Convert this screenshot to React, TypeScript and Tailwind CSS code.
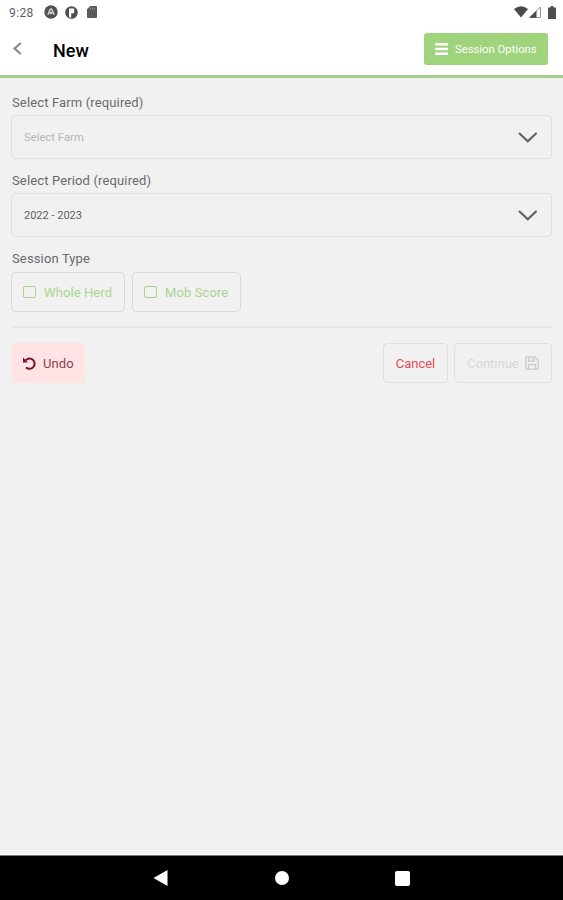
import type { ReactNode } from "react";

const StatusBar = () => {
  return (
    <div className="flex items-center justify-between h-6 pl-[9px] pr-[7px] text-[#606060]">
      <div className="flex items-center">
        <span className="w-[35px] pt-px text-[12px] tracking-[0.4px]">9:28</span>
        <svg className="w-[14px] h-[14px]" viewBox="0 0 14 14">
          <circle cx="7" cy="7" r="6.7" fill="#505050" />
          <path
            d="M3.8 9.8 6 4.6Q7 3.2 8 4.6L10.2 9.8M5.8 8.8 7 7 8.2 8.8"
            fill="none"
            stroke="#e8e8e8"
            strokeWidth="1.2"
          />
        </svg>
        <svg className="w-[13px] h-[13px] ml-[7px]" viewBox="0 0 13 13">
          <circle cx="6.5" cy="6.5" r="6.3" fill="#4c4c4c" />
          <path d="M4 2.6h5.2v4.6H6.2v4.4H4z" fill="#fff" />
        </svg>
        <svg className="w-[10px] h-[12px] ml-[9px]" viewBox="0 0 10 12">
          <path d="M3.3 0H9q1 0 1 1v10q0 1-1 1H1q-1 0-1-1V3.3z" fill="#5a5a5a" />
          <path d="M3.4 1.6v2M5.4 1.6v2M7.4 1.6v2" stroke="#999" strokeWidth="0.9" />
        </svg>
      </div>
      <div className="flex items-center">
        <svg className="w-[14px] h-[12px]" viewBox="0 0 14 12">
          <path d="M0 3Q7-2.6 14 3L7 11.6z" fill="#4a4a4a" />
        </svg>
        <svg className="w-[12px] h-[12px] ml-[1px]" viewBox="0 0 12 12">
          <path d="M11.5 1v10.5H1z" fill="#fff" stroke="#888" strokeWidth="0.9" />
          <path d="M7.5 4.5v7.3H.2z" fill="#4a4a4a" />
        </svg>
        <svg className="w-[8px] h-[13px] ml-[7px]" viewBox="0 0 8 13">
          <path d="M2.5 0h3v1.5H8V13H0V1.5h2.5z" fill="#505050" />
        </svg>
      </div>
    </div>
  );
};

const Header = () => {
  return (
    <div className="flex items-center h-[54px] pl-[12px] pr-[15px] border-b-[3px] border-[#a5d08b]">
      <svg className="w-[11px] h-[13px] -mt-[2px]" viewBox="0 0 11 13">
        <path d="M8.8 1 2.6 6.5 8.8 12" fill="none" stroke="#8b8b90" strokeWidth="2.3" />
      </svg>
      <h1 className="mt-[2px] ml-[30px] text-[18px] leading-5 font-medium text-black">New</h1>
      <button className="flex items-center ml-auto w-[124px] h-[32px] pl-[11px] -mt-[2px] rounded-[3px] bg-[#9fd37c] text-white">
        <svg className="w-[13px] h-[12px]" viewBox="0 0 13 12">
          <path d="M0 1.3h13M0 6h13M0 10.7h13" stroke="#fff" strokeWidth="2.6" />
        </svg>
        <span className="pt-[3px] ml-[7px] text-[11.3px] whitespace-nowrap">Session Options</span>
      </button>
    </div>
  );
};

const Label = ({ children }: { children: ReactNode }) => {
  return (
    <p className="h-[18px] pl-px text-[13px] leading-[18px] tracking-[0.14px] text-[#6a6a6a]">
      {children}
    </p>
  );
};

const Select = ({ value, placeholder }: { value?: string; placeholder?: string }) => {
  return (
    <div className="flex items-center justify-between h-[44px] mt-[3px] pl-[12px] pr-[14px] border border-[#dfdfdf] rounded-[4px]">
      {value ? (
        <span className="pt-[2px] text-[11px] text-[#606060]">{value}</span>
      ) : (
        <span className="pt-[2px] text-[11.3px] text-[#b6b6b6]">{placeholder}</span>
      )}
      <svg className="w-[19px] h-[11px]" viewBox="0 0 19 11">
        <path d="M1 .9 9.8 9.3 18.6.9" fill="none" stroke="#5f5f5f" strokeWidth="2.1" />
      </svg>
    </div>
  );
};

const CheckButton = ({ label, className }: { label: string; className: string }) => {
  return (
    <button
      className={`flex items-center h-[40px] pl-[11px] border border-[#dadada] rounded-[4px] text-[#a9d690] ${className}`}
    >
      <span className="w-[13px] h-[12px] -mt-px border border-[#a5d48a] rounded-[2px]" />
      <span className="pt-px ml-[8px] text-[13px] tracking-[0.1px] whitespace-nowrap">
        {label}
      </span>
    </button>
  );
};

const NavBar = () => {
  return (
    <div className="h-[46px] bg-white pt-px">
      <div className="flex items-center justify-between h-[45px] pl-[153px] pr-[153px] border-t border-[#777] bg-black">
        <svg className="w-[15px] h-[16px]" viewBox="0 0 15 16">
          <path d="M14.5 0v16L.5 8z" fill="#fff" />
        </svg>
        <span className="w-[14px] h-[14px] rounded-full bg-white" />
        <span className="w-[15px] h-[15px] rounded-[2px] bg-white" />
      </div>
    </div>
  );
};

const App = () => {
  return (
    <div className="flex flex-col w-[563px] h-[900px] bg-white font-['Roboto',sans-serif]">
      <StatusBar />
      <Header />
      <div className="flex-1 pt-[16px] pl-[11px] pr-[11px] bg-[#f1f1f1]">
        <Label>Select Farm (required)</Label>
        <Select placeholder="Select Farm" />
        <div className="mt-[13px]">
          <Label>Select Period (required)</Label>
          <Select value="2022 - 2023" />
        </div>
        <div className="mt-[13px]">
          <Label>Session Type</Label>
          <div className="flex gap-[7px] mt-[4px]">
            <CheckButton label="Whole Herd" className="w-[114px]" />
            <CheckButton label="Mob Score" className="w-[109px]" />
          </div>
        </div>
        <div className="mt-[14px] ml-px border-t-2 border-[#e4e4e4]" />
        <div className="flex mt-[15px] text-[13px]">
          <button className="flex items-center w-[73px] h-[40px] ml-px pl-[11px] rounded-[3px] bg-[#ffe3e5] text-[#8c3f4f]">
            <svg className="w-[13px] h-[13px]" viewBox="0 0 13 13">
              <path
                d="M2.6 3.4A5.1 5.1 0 1 1 3 10.4"
                fill="none"
                stroke="#7c1427"
                strokeWidth="2"
              />
              <path d="M0 .6v5h5z" fill="#7c1427" />
            </svg>
            <span className="pt-px ml-[7px] tracking-[0.1px]">Undo</span>
          </button>
          <button className="w-[65px] h-[40px] pt-px ml-auto border border-[#dfdfdf] rounded-[4px] text-[#e04f52]">
            Cancel
          </button>
          <button className="flex items-center w-[98px] h-[40px] ml-[6px] pl-[12px] border border-[#dfdfdf] rounded-[4px] text-[#d8d8d8]">
            <span className="pt-px">Continue</span>
            <svg
              className="w-[14px] h-[14px] ml-[6px]"
              viewBox="0 0 14 14"
              fill="none"
              stroke="#c9c9c9"
              strokeWidth="1.2"
            >
              <path d="M1.6.8h8L13.2 4v8.4q0 .8-.8.8H1.6q-.8 0-.8-.8V1.6q0-.8.8-.8z" />
              <path d="M3.6.8v4.4h5.6V.8M7.3 1.8v2M3.4 13.2V8.6h7.2v4.6" />
            </svg>
          </button>
        </div>
      </div>
      <NavBar />
    </div>
  );
};

export default App;
